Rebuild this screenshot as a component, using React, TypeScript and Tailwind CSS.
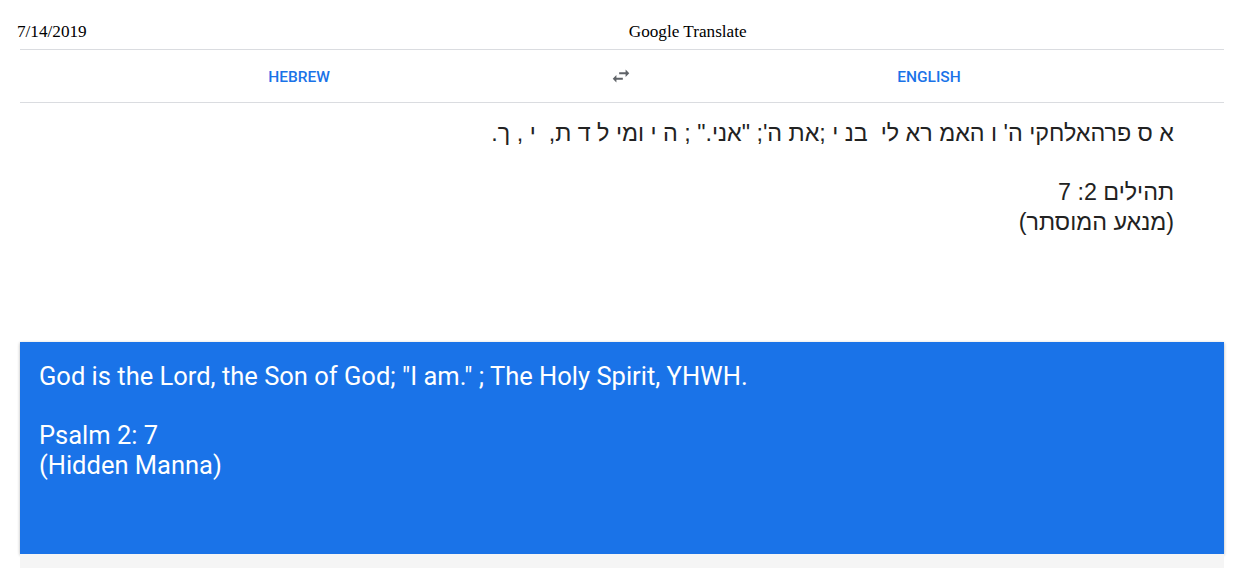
import React from 'react'

const HEBREW_LINE = `א ס פרהאלחקי ה' ו האמ רא לי  בנ י ;את ה'; "אני." ; ה י ומי ל ד ת,  י , ך.`

const SwapIcon: React.FC = () => (
    <svg width="22" height="22" viewBox="0 0 24 24" fill="#5f6368">
        <path d="M6.99 11L3 15l3.99 4v-3H14v-2H6.99v-3zM21 9l-3.99-4v3H10v2h7.01v3L21 9z" />
    </svg>
)

const App: React.FC = () => {
    return (
        <div className="w-[1244px] h-[568px] bg-white overflow-hidden">
            {/* print header */}
            <div className="flex items-center h-[49px] pl-[17px] pt-[14px] font-['Liberation_Serif',serif] text-[17.2px] text-black">
                <span>7/14/2019</span>
                <span className="ml-[542px]">Google Translate</span>
            </div>

            <div className="mx-[20px]">
                {/* language tabs */}
                <div className="flex items-center h-[54px] pt-[4px] border-y border-[#dadce0] font-['Roboto',sans-serif] text-[15.5px] font-medium text-[#1a73e8]">
                    <div className="w-[558px] text-center">HEBREW</div>
                    <div className="w-[86px] flex justify-center -mt-[4px]">
                        <SwapIcon />
                    </div>
                    <div className="w-[530px] text-center">ENGLISH</div>
                </div>

                {/* source */}
                <div
                    dir="rtl"
                    className="h-[239px] pt-[16px] pr-[50px] font-['Liberation_Sans',sans-serif] text-[23.3px] leading-[29.5px] text-[#222]"
                >
                    <div className="whitespace-pre">{HEBREW_LINE}</div>
                    <div>&nbsp;</div>
                    <div>תהילים 2: 7</div>
                    <div>(מנאע המוסתר)</div>
                </div>

                {/* result */}
                <div className="h-[212px] bg-[#1a73e8] shadow-[0_1px_3px_rgba(0,0,0,0.3)] pt-[20px] pl-[19px] font-['Roboto',sans-serif] text-[25.5px] leading-[29.5px] text-white">
                    <div>God is the Lord, the Son of God; "I am." ; The Holy Spirit, YHWH.</div>
                    <div>&nbsp;</div>
                    <div>Psalm 2: 7</div>
                    <div>(Hidden Manna)</div>
                </div>
                <div className="h-[20px] bg-[#f5f5f5]" />
            </div>
        </div>
    )
}

export default App
